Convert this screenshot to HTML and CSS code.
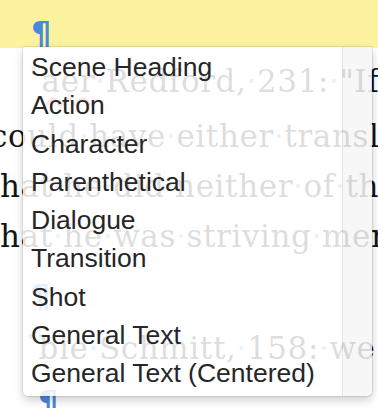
FILE: index.html
```
<!DOCTYPE html>
<html lang="en">
<head>
<meta charset="utf-8">
<title>Paragraph style menu</title>
<link rel="stylesheet" href="styles.css">
</head>
<body>
<div class="doc">
  <div class="band"><span class="pil">¶</span></div>
  <p class="ln l1"><span class="fn">˚</span><span class="typo">aer</span><span class="sp">·</span>Redford,<span class="sp">·</span>231:<span class="sp">·</span>"If<span class="sp">·</span>we</p>
  <p class="ln l2">could<span class="sp">·</span>have<span class="sp">·</span>either<span class="sp">·</span>translated</p>
  <p class="ln l3">that<span class="sp">·</span>he<span class="sp">·</span>did<span class="sp">·</span>neither<span class="sp">·</span>of<span class="sp">·</span>them</p>
  <p class="ln l3">that<span class="sp">·</span>he<span class="sp">·</span>was<span class="sp">·</span>striving<span class="sp">·</span>merely</p>
  <p class="ln l5"><span class="pil">¶</span></p>
  <p class="ln l6"><span class="fn">˚</span>bie<span class="sp">·</span>Schmitt,<span class="sp">·</span>158:<span class="sp">·</span>we:</p>
  <p class="ln l7"><span class="pil">¶</span></p>
</div>
<div class="menu">
  <ul class="items">
    <li class="item">Scene Heading</li>
    <li class="item">Action</li>
    <li class="item">Character</li>
    <li class="item">Parenthetical</li>
    <li class="item">Dialogue</li>
    <li class="item">Transition</li>
    <li class="item">Shot</li>
    <li class="item">General Text</li>
    <li class="item">General Text (Centered)</li>
  </ul>
  <div class="track"></div>
</div>
</body>
</html>
```
FILE: styles.css
```
html, body {
  margin: 0;
  padding: 0;
}
body {
  position: relative;
  width: 378px;
  height: 408px;
  overflow: hidden;
  background: #ffffff;
}
.doc {
  font-family: "DejaVu Serif", serif;
  font-size: 31px;
  color: #141414;
  white-space: nowrap;
}
.band {
  height: 48px;
  box-sizing: border-box;
  background: #fdf39e;
  padding: 18px 0 0 31px;
  line-height: 31px;
}
.pil {
  font-family: "DejaVu Sans", sans-serif;
  font-weight: bold;
  font-size: 32px;
  color: #4a88dc;
}
.ln {
  margin: 0;
  height: 50px;
  line-height: 50px;
  letter-spacing: 0.6px;
}
.sp {
  color: #5b9be6;
}
.fn {
  font-size: 14px;
  line-height: 1;
  vertical-align: 12px;
  margin-right: 4px;
}
.typo {
  text-decoration: underline wavy #e04848;
  text-underline-offset: 5px;
}
.l1 {
  margin-top: 8px;
  padding-left: 30px;
}
.l2 {
  margin-top: 5px;
  text-indent: -10px;
}
.l3 {
  text-indent: -13px;
}
.l5 {
  margin-top: 10px;
  padding-left: 30px;
}
.l6 {
  margin-top: 2px;
  padding-left: 27px;
}
.l7 {
  margin-top: 4px;
  padding-left: 38px;
}
.menu {
  position: absolute;
  left: 23px;
  top: 47px;
  width: 349px;
  display: flex;
  background: rgba(255, 255, 255, 0.86);
  border-radius: 0 0 5px 5px;
  box-shadow: 0 0 0 0.5px rgba(0, 0, 0, 0.16), 0 4px 10px rgba(0, 0, 0, 0.2);
}
.items {
  list-style: none;
  margin: 0;
  padding: 1px 0 3px;
  flex: 1;
}
.item {
  font-family: "Liberation Sans", Arial, sans-serif;
  font-size: 26.5px;
  line-height: 38.3px;
  padding-left: 8px;
  color: #262626;
  white-space: nowrap;
}
.track {
  width: 29px;
  border-left: 1px solid rgba(0, 0, 0, 0.07);
  background: rgba(0, 0, 0, 0.03);
}
```
